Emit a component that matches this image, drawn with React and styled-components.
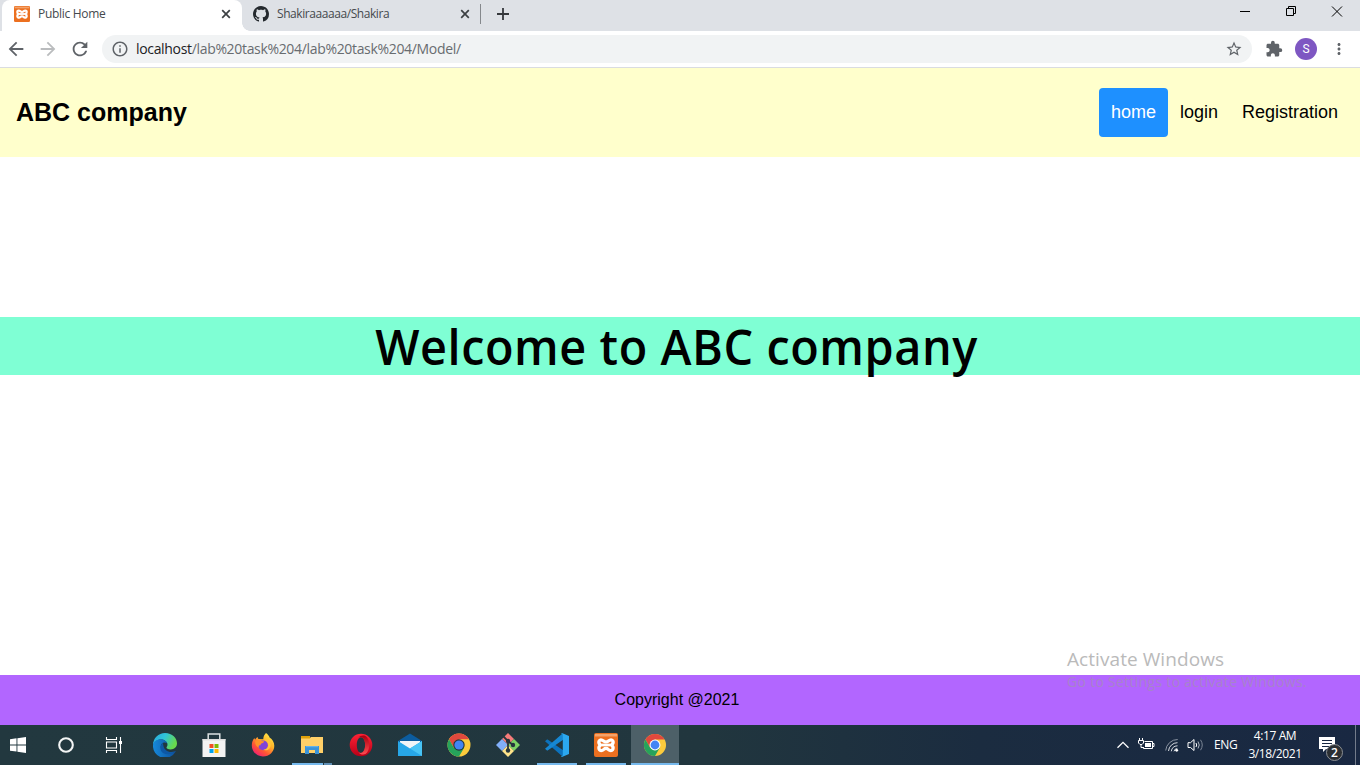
import React from "react";
import styled, { createGlobalStyle } from "styled-components";

const ui = '"Open Sans", "Noto Sans", sans-serif';
const arial = '"Liberation Sans", Arial, sans-serif';

const GlobalStyle = createGlobalStyle`
  * { box-sizing: border-box; }
  body { margin: 0; background: #fff; overflow: hidden; }
  svg { display: block; flex: none; }
`;

const Screen = styled.div`
  position: relative;
  width: 1360px;
  height: 765px;
  display: flex;
  flex-direction: column;
  background: #fff;
`;

/* Browser frame */
const TabStrip = styled.div`
  height: 31px;
  display: flex;
  padding-left: 2px;
  background: #dee1e6;
`;
const Tab = styled.div`
  width: ${(p) => (p.$active ? 240 : 238)}px;
  height: 31px;
  display: flex;
  align-items: center;
  padding: 0 ${(p) => (p.$active ? 10 : 9)}px 3px ${(p) => (p.$active ? 12 : 11)}px;
  gap: 8px;
  background: ${(p) => (p.$active ? "#fff" : "transparent")};
  border-radius: 8px 8px 0 0;
`;
const TabFoot = styled.div`
  width: 8px;
  height: 8px;
  margin: 23px -8px 0 0;
  background: radial-gradient(circle at 100% 0, #dee1e6 7.5px, #fff 8px);
`;
const TabTitle = styled.span`
  flex: 1;
  font: 12px/16px ${ui};
  letter-spacing: ${(p) => p.$track}px;
  color: #45494d;
  white-space: nowrap;
`;
const TabDivider = styled.div`
  width: 1px;
  height: 20px;
  margin: 4px 16px 0 0;
  background: #85888c;
`;
const NewTab = styled.div`
  padding-top: 8px;
`;
const WindowControls = styled.div`
  display: flex;
  align-items: center;
  height: 23px;
  margin-left: auto;
  & > svg { margin: 0 17px; }
`;
const AddressRow = styled.div`
  height: 37px;
  display: flex;
  align-items: center;
  padding-left: 5px;
  border-bottom: 1px solid #dadce0;
  background: #fff;
`;
const NavButtons = styled.div`
  display: flex;
  gap: 10px;
  margin-right: 11px;
`;
const AddressBar = styled.div`
  width: 1150px;
  height: 28px;
  margin-right: 13px;
  border-radius: 14px;
  background: #f1f3f4;
  display: flex;
  align-items: center;
  padding: 0 9px;
`;
const Url = styled.span`
  flex: 1;
  margin-left: 7px;
  font: 14px/20px ${ui};
  letter-spacing: -0.33px;
  color: #686c70;
  b { font-weight: 400; color: #202124; }
`;
const Avatar = styled.div`
  width: 22px;
  height: 22px;
  margin: 0 13px 0 12px;
  border-radius: 50%;
  background: #7e57c2;
  color: #fff;
  font: 12px/22px Roboto, sans-serif;
  text-align: center;
`;

/* Web page */
const SiteHeader = styled.header`
  height: 89px;
  display: flex;
  align-items: center;
  justify-content: space-between;
  padding: 0 10px 0 16px;
  background: #ffffcc;
  font-family: ${arial};
`;
const Brand = styled.div`
  font-size: 25px;
  line-height: 25px;
  font-weight: 700;
`;
const SiteNav = styled.nav`
  display: flex;
`;
const NavLink = styled.a`
  padding: 12px;
  font-size: 18px;
  line-height: 25px;
  border-radius: 4px;
  color: ${(p) => (p.$active ? "#fff" : "#000")};
  background: ${(p) => (p.$active ? "dodgerblue" : "transparent")};
`;
const Content = styled.main`
  flex: 1;
  padding-top: 160px;
`;
const Welcome = styled.h1`
  height: 58px;
  margin: 0;
  padding-right: 6px;
  background: #7fffd4;
  font: 650 49px/58px ${ui};
  letter-spacing: 0.6px;
  text-align: center;
  span { display: inline-block; transform: scaleX(0.955); }
`;
const SiteFooter = styled.footer`
  height: 50px;
  padding-right: 6px;
  background: #b266ff;
  font: 16px/50px ${arial};
  text-align: center;
`;

/* Desktop */
const Watermark = styled.div`
  position: absolute;
  left: 1067px;
  top: 646px;
  font-family: ${ui};
  white-space: nowrap;
`;
const WatermarkTitle = styled.div`
  font-size: 19px;
  line-height: 26px;
  letter-spacing: 0.07px;
  color: #bababa;
`;
const WatermarkText = styled.div`
  font-size: 14px;
  line-height: 19px;
  letter-spacing: 0.3px;
  color: #a783cb;
`;
const Taskbar = styled.div`
  height: 40px;
  display: flex;
  background: linear-gradient(90deg, #22383f 0%, #21363e 52%, #1b2c40 72%, #192842 100%);
`;
const SystemButton = styled.div`
  width: ${(p) => p.$width}px;
  display: grid;
  place-items: center;
`;
const Apps = styled.div`
  display: flex;
  gap: 1px;
  margin-left: 9px;
`;
const TaskbarApp = styled.div`
  width: 48px;
  height: 40px;
  display: grid;
  grid-template-rows: 38px 2px;
  justify-items: center;
  background: ${(p) => (p.$focused ? "#4d6068" : "transparent")};
  & > svg { margin-top: 8px; }
`;
const Running = styled.div`
  display: flex;
  gap: 1px;
  width: ${(p) => (p.$full ? 48 : 40)}px;
  height: 2px;
  &::before { content: ""; flex: 1; background: #76b9ed; }
  &::after { content: ""; display: ${(p) => (p.$stacked ? "block" : "none")}; width: 8px; background: #5f8fb5; }
`;
const Tray = styled.div`
  display: flex;
  align-items: center;
  margin-left: auto;
  color: #fff;
  font: 12px/18px ${ui};
`;
const TrayIcons = styled.div`
  display: flex;
  align-items: center;
  gap: 8px;
  & > svg:nth-child(2) { margin-right: 2px; }
`;
const Language = styled.span`
  width: 24px;
  margin-left: 10px;
  letter-spacing: -0.4px;
`;
const Clock = styled.div`
  width: 60px;
  margin: 0 14px 0 7px;
  text-align: center;
  letter-spacing: -0.4px;
  white-space: nowrap;
`;
const Notifications = styled.div`
  position: relative;
  width: 26px;
  height: 40px;
  padding-top: 11px;
`;
const Badge = styled.span`
  position: absolute;
  left: 7px;
  top: 19px;
  width: 17px;
  height: 17px;
  border: 1px solid #8b8f94;
  border-radius: 50%;
  background: #2b2f33;
  font: 600 12px/15px ${ui};
  text-align: center;
`;
const ShowDesktop = styled.div`
  width: 5px;
  height: 40px;
  margin-left: 10px;
  border-left: 1px solid #737c8b;
`;

const Xampp = ({ size }) => (
  <svg width={size} height={size} viewBox="0 0 24 24">
    <rect width="24" height="24" rx="2" fill="#ec7020" />
    <path d="M1 1h22v2.500H1z" fill="#f3a36b" />
    <path
      d="M8.200 7.200C4.500 6 3.800 10 6.600 12c-2.800 2-2 6.600 1.800 5.300 1.600-.6 1.600-1.900 3.600-1.900s2 1.300 3.600 1.900c3.800 1.300 4.600-3.300 1.800-5.300 2.800-2 2.100-6-1.600-4.800C14.200 7.800 14 8.900 12 8.900s-2.200-1.100-3.800-1.700z"
      fill="none"
      stroke="#fff"
      strokeWidth="3.300"
      strokeLinejoin="round"
    />
    <path d="M7.500 12h9" stroke="#fff" strokeWidth="2.800" />
  </svg>
);
const Github = () => (
  <svg width="16" height="16" viewBox="0 0 16 16" fill="#24292e">
    <path d="M8 0C3.580 0 0 3.580 0 8c0 3.540 2.290 6.530 5.470 7.590.4.070.55-.17.55-.38 0-.19-.01-.82-.01-1.490-2.010.37-2.530-.49-2.690-.94-.09-.23-.48-.94-.82-1.130-.28-.15-.68-.52-.01-.53.63-.01 1.080.58 1.230.82.72 1.210 1.870.87 2.330.66.07-.52.28-.87.51-1.070-1.780-.2-3.640-.89-3.640-3.950 0-.87.31-1.590.82-2.150-.08-.2-.36-1.020.08-2.120 0 0 .67-.21 2.200.82.64-.18 1.320-.27 2-.27s1.360.09 2 .27c1.530-1.040 2.200-.82 2.200-.82.44 1.100.16 1.920.08 2.120.51.56.82 1.270.82 2.150 0 3.070-1.870 3.750-3.650 3.950.29.25.54.73.54 1.480 0 1.070-.01 1.930-.01 2.200 0 .21.15.46.55.38A8.010 8.010 0 0 0 16 8c0-4.420-3.580-8-8-8z" />
  </svg>
);
const CloseTab = () => (
  <svg width="12" height="12" viewBox="0 0 12 12" stroke="#3c4043" strokeWidth="1.700">
    <path d="M2.200 2.200l7.600 7.600M9.800 2.200l-7.600 7.600" />
  </svg>
);
const Material = ({ d, size = 18, fill = "#5f6368" }) => (
  <svg width={size} height={size} viewBox="0 0 24 24" fill={fill}><path d={d} /></svg>
);
const arrowBack = "M20 11H7.830l5.590-5.590L12 4l-8 8 8 8 1.410-1.410L7.830 13H20v-2z";
const arrowForward = "M12 4l-1.410 1.410L16.170 11H4v2h12.170l-5.580 5.590L12 20l8-8z";
const refresh = "M17.650 6.350A7.958 7.958 0 0 0 12 4c-4.420 0-7.990 3.580-7.990 8s3.570 8 7.990 8c3.730 0 6.840-2.550 7.730-6h-2.080A5.990 5.990 0 0 1 12 18c-3.310 0-6-2.690-6-6s2.690-6 6-6c1.660 0 3.140.69 4.220 1.780L13 11h7V4l-2.350 2.350z";
const info = "M11 7h2v2h-2zm0 4h2v6h-2zm1-9C6.480 2 2 6.480 2 12s4.480 10 10 10 10-4.480 10-10S17.520 2 12 2zm0 18c-4.410 0-8-3.590-8-8s3.590-8 8-8 8 3.590 8 8-3.590 8-8 8z";
const star = "M22 9.240l-7.190-.62L12 2 9.190 8.630 2 9.240l5.460 4.730L5.820 21 12 17.270 18.180 21l-1.630-7.030L22 9.240zM12 15.400l-3.760 2.270 1-4.280-3.320-2.880 4.380-.38L12 6.100l1.710 4.040 4.380.38-3.320 2.880 1 4.280L12 15.400z";
const puzzle = "M20.500 11H19V7c0-1.100-.9-2-2-2h-4V3.500a2.500 2.500 0 0 0-5 0V5H4c-1.100 0-1.990.9-1.990 2v3.800H3.500c1.490 0 2.700 1.210 2.700 2.700s-1.210 2.700-2.700 2.700H2V20c0 1.100.9 2 2 2h3.800v-1.500c0-1.490 1.210-2.700 2.700-2.700s2.700 1.210 2.700 2.700V22H17c1.100 0 2-.9 2-2v-4h1.500a2.500 2.500 0 0 0 0-5z";
const more = "M12 8c1.100 0 2-.9 2-2s-.9-2-2-2-2 .9-2 2 .9 2 2 2zm0 2c-1.100 0-2 .9-2 2s.9 2 2 2 2-.9 2-2-.9-2-2-2zm0 6c-1.100 0-2 .9-2 2s.9 2 2 2 2-.9 2-2-.9-2-2-2z";

const WindowsLogo = () => (
  <svg width="16" height="16" viewBox="0 0 16 16" fill="#fff">
    <path d="M0 2.200L6.500 1.300v6.200H0zM7.400 1.200L16 0v7.500H7.400zM0 8.400h6.500v6.200L0 13.700zM7.400 8.400H16V16l-8.600-1.200z" />
  </svg>
);
const Cortana = () => (
  <svg width="18" height="18" viewBox="0 0 18 18"><circle cx="9" cy="9" r="6.800" fill="none" stroke="#f3f5f5" strokeWidth="2.100" /></svg>
);
const TaskView = () => (
  <svg width="18" height="16" viewBox="0 0 18 16" fill="none" stroke="#fff" strokeWidth="1.100">
    <path d="M1.500 0v2.500h10V0M1.500 16v-2.500h10V16M1.500 5h10v6h-10zM15.500 0v16" />
    <path d="M14 4h3v3h-3z" fill="#fff" stroke="none" />
  </svg>
);
const Edge = () => (
  <svg width="24" height="24" viewBox="0 0 24 24">
    <defs>
      <linearGradient id="edgeTop" x1="0" x2="1" y1="0" y2=".4"><stop offset="0" stopColor="#2aa5dd" /><stop offset=".5" stopColor="#2fc5d8" /><stop offset="1" stopColor="#68d84c" /></linearGradient>
      <linearGradient id="edgeLow" x1="0" x2="1"><stop offset="0" stopColor="#1689da" /><stop offset="1" stopColor="#0d4f9c" /></linearGradient>
    </defs>
    <path d="M0 12A12 12 0 0 1 12 0c7.500 0 12 5.200 12 10.300 0 4-3 6.200-6.200 6.200-3 0-4.300-1-4.300-1.900 0-.7 1-1.200 1-2.800C14.500 8.500 11 6.500 8 6.500c-4 0-7 2.500-8 5.500z" fill="url(#edgeTop)" />
    <path d="M0 12c.5-3.500 4-5.700 7.500-5.700 3.500 0 6 2 6.800 4-4-2-7 .5-6.500 4.200.5 3.800 4.200 6.500 8.500 6 2.500-.2 4.500-1.500 5.500-2.300.6-.4 1 0 .7.500A12 12 0 0 1 0 12z" fill="url(#edgeLow)" />
    <path d="M10 9.800c-3.500 2.500-3.500 8 .5 10.500 4 2.200 9 .5 11.300-2.100-2.800 1.200-6.500 1-8.800-1-2.700-2.300-2.800-4.800-3-7.400z" fill="#0d58a6" />
  </svg>
);
const Store = () => (
  <svg width="24" height="24" viewBox="0 0 24 24">
    <path d="M6.200 7V1h11.600v6" fill="none" stroke="#dce2e3" strokeWidth="1.500" />
    <path d="M.5 6h23v18H.5z" fill="#f3f3f3" />
    <path d="M.5 6h23v1.500H.5z" fill="#dedede" />
    <path d="M7.500 11h4v4h-4z" fill="#f25022" /><path d="M12.500 11h4v4h-4z" fill="#7fba00" />
    <path d="M7.500 16h4v4h-4z" fill="#00a4ef" /><path d="M12.500 16h4v4h-4z" fill="#ffb900" />
  </svg>
);
const Firefox = () => (
  <svg width="24" height="24" viewBox="0 0 24 24">
    <defs><linearGradient id="fox" x1=".9" y1="0" x2=".2" y2="1"><stop offset="0" stopColor="#fff44f" /><stop offset=".4" stopColor="#ffb128" /><stop offset=".7" stopColor="#ff5634" /><stop offset="1" stopColor="#ef177b" /></linearGradient></defs>
    <path d="M15 0c2 1.200 3 3 3.600 4.500 2.800 1.400 4.700 4.900 4.700 8.300C23.300 19 18.200 23.500 12 23.500S.8 18.600.8 12.500C.8 9 2 6.600 3.500 5c.1 1 .4 1.300.8 1.600.5-1.200 1.400-2.100 2.400-2.600 0 1 .3 1.800 1 2.100l4.600.2C12.200 3.500 13.500 1.500 15 0z" fill="url(#fox)" />
    <circle cx="12" cy="12.300" r="4.900" fill="#8043d7" />
    <path d="M4.200 8.200c2-1.400 4.600-1.300 6.200-.2l2.700.3c-.2 1.500-1.600 1.900-2.800 2.300-.8.500-.7 1.300-.7 1.700-2.200-.5-2.500 1.400-1.200 2.500-3-.8-4.500-3.600-4.200-6.600z" fill="#ff9229" />
    <path d="M13.600 7c2 .7 3.600 2.400 3.600 5 0 3-2.700 5-5.400 4.600 4.400 2.200 8.500-1.200 8-5.700-.2-2.600-1.500-4-3.200-5z" fill="#ffc53a" />
  </svg>
);
const Folder = () => (
  <svg width="24" height="24" viewBox="0 0 24 24">
    <path d="M1 5h9l1-1h12v16H1z" fill="#ffd068" />
    <path d="M1 3h9v2.500H1z" fill="#dfa10a" />
    <path d="M5 21v-8h14v8h-4v-4H9v4z" fill="#3b94d9" />
    <path d="M6 13h12v1.200H6z" fill="#63b1e8" />
  </svg>
);
const Opera = () => (
  <svg width="24" height="24" viewBox="0 0 24 24">
    <defs>
      <linearGradient id="operaRing" x1="0" x2="0" y1="0" y2="1"><stop offset="0" stopColor="#ff2235" /><stop offset="1" stopColor="#b80018" /></linearGradient>
      <linearGradient id="operaSide" x1="0" x2="0" y1="0" y2="1"><stop offset="0" stopColor="#a8000f" /><stop offset="1" stopColor="#ff4c52" /></linearGradient>
    </defs>
    <path d="M12 .7a11.300 11.300 0 1 0 0 22.600 11.300 11.300 0 0 0 0-22.600zm0 3.500c2.800 0 4.200 3.800 4.200 7.800s-1.400 7.800-4.200 7.800S7.800 16 7.800 12s1.400-7.800 4.200-7.800z" fill="url(#operaRing)" fillRule="evenodd" />
    <path d="M9.500 4.800C11 2.600 14 2 16.500 3c5 3 5 15 0 18-2.500 1-5.500.4-7-1.800 1.300.9 2.800.9 4 .1C17 16.500 17 7.500 13.500 4.700c-1.200-.8-2.700-.8-4 .1z" fill="url(#operaSide)" />
  </svg>
);
const Mail = () => (
  <svg width="24" height="24" viewBox="0 0 24 24">
    <path d="M0 8l12-7.500L24 8v4H0z" fill="#0c5c9e" />
    <path d="M2 8h20v8H2z" fill="#f2f5f7" />
    <path d="M0 8l12 7.500L24 8v15H0z" fill="#27a7e8" /><path d="M24 8v15L12 15.500z" fill="#48c4f5" />
  </svg>
);
const Chrome = ({ small }) => (
  <svg width="24" height="24" viewBox={small ? "-.5 -.5 25 25" : "0 0 24 24"}>
    <circle cx="12" cy="12" r="11.500" fill="#fbcb3c" />
    <path d="M2.040 6.250A11.500 11.500 0 0 1 21.960 6.250H12L7 14.900z" fill="#e0483d" />
    <path d="M2.040 6.250A11.500 11.500 0 0 0 12 23.500l5-8.600H7z" fill="#26a35b" />
    <circle cx="12" cy="12" r="5.700" fill={small ? "#fff" : "#24363c"} /><circle cx="12" cy="12" r="4.600" fill="#4285f4" />
  </svg>
);
const Git = () => (
  <svg width="24" height="24" viewBox="0 0 24 24">
    <path d="M12 0l6 6-6 6-6-6z" fill="#f67b7a" /><path d="M6 6l6 6-6 6-6-6z" fill="#81aff9" />
    <path d="M18 6l6 6-6 6-6-6z" fill="#7ed366" /><path d="M12 12l6 6-6 6-6-6z" fill="#ffe38a" />
    <path d="M7.500 3.500L12 8v10M12 8l5 4" fill="none" stroke="#26363d" strokeWidth="1.800" />
    <g fill="#26363d"><circle cx="12" cy="8" r="2.200" /><circle cx="12" cy="17.500" r="2.200" /><circle cx="17" cy="12" r="2.200" /></g>
  </svg>
);
const VsCode = () => (
  <svg width="24" height="24" viewBox="0 0 24 24">
    <path d="M1.700 6.700L0 8.200l17.500 15.300 1.700-5.500L3 6.700c-.4-.3-.9-.3-1.300 0z" fill="#0c72bd" />
    <path d="M1.700 17.300L0 15.800 17.500.5l1.700 5.500L3 17.300c-.4.300-.9.300-1.300 0z" fill="#1687d2" />
    <path d="M17.500.2L24 3v18l-6.500 2.800c-.8 0-1.200-.4-1.700-.9.900.4 2 .1 2-1.400v-19c0-1.500-1.100-1.800-2-1.400.5-.5.900-.9 1.700-.9z" fill="#2ba8ef" />
  </svg>
);
const Caret = () => <svg width="14" height="10" viewBox="0 0 14 10" fill="none" stroke="#fff" strokeWidth="1.300"><path d="M1.500 7.800L7 2.300l5.500 5.500" /></svg>;
const Battery = () => (
  <svg width="17" height="14" viewBox="0 0 17 14" fill="none" stroke="#fff">
    <path d="M6.500 3.500h8v7h-9V9M14.500 5.500H16v3h-1.500M1.500 0v2.500M4.500 0v2.500M3 6v3.500h2" />
    <path d="M.5 2.500h5V5L4 6.500H2L.5 5z" fill="#1b2b43" /><path d="M7 5h6v4H7z" fill="#fff" stroke="none" />
  </svg>
);
const Wifi = () => (
  <svg width="14" height="14" viewBox="0 0 14 14" fill="none" stroke="#d6dae0">
    <path d="M.7 12.500A12 12 0 0 1 12.700 1.500" stroke="#8c95a3" /><path d="M3.500 13a9 9 0 0 1 9-8.300M6.300 13.300a6.500 6.500 0 0 1 6.200-5.500" /><path d="M9 13.300a3.500 3.500 0 0 1 3.300-2.800" /><circle cx="11.700" cy="12.300" r="1.400" fill="#fff" stroke="none" />
  </svg>
);
const Volume = () => (
  <svg width="17" height="14" viewBox="0 0 17 14" fill="none" stroke="#fff">
    <path d="M1 4.700h2.500L7 1.500v11L3.500 9.500H1z" /><path d="M9 5q1.400 2 0 4" /><path d="M11 3.500q2.500 3.500 0 7" stroke="#b0b7c0" /><path d="M13.500 1.800q3.500 5.200 0 10.400" stroke="#7c8796" />
  </svg>
);

const apps = [
  { name: "edge", icon: <Edge /> },
  { name: "store", icon: <Store /> },
  { name: "firefox", icon: <Firefox /> },
  { name: "explorer", icon: <Folder />, running: true, stacked: true },
  { name: "opera", icon: <Opera /> },
  { name: "mail", icon: <Mail /> },
  { name: "chrome", icon: <Chrome /> },
  { name: "git", icon: <Git /> },
  { name: "code", icon: <VsCode />, running: true },
  { name: "xampp", icon: <Xampp size={24} />, running: true },
  { name: "chrome-window", icon: <Chrome small />, running: true, focused: true },
];

export default function App() {
  return (
    <Screen>
      <GlobalStyle />
      <TabStrip>
        <Tab $active>
          <Xampp size={16} />
          <TabTitle $track={-0.3}>Public Home</TabTitle>
          <CloseTab />
        </Tab>
        <TabFoot />
        <Tab>
          <Github />
          <TabTitle $track={-0.43}>Shakiraaaaaa/Shakira</TabTitle>
          <CloseTab />
        </Tab>
        <TabDivider />
        <NewTab>
          <svg width="12" height="12" viewBox="0 0 12 12" stroke="#35383c" strokeWidth="1.800"><path d="M6 0v12M0 6h12" /></svg>
        </NewTab>
        <WindowControls>
          <svg width="12" height="12" viewBox="0 0 12 12"><path d="M1 5h10v1H1z" /></svg>
          <svg width="12" height="12" viewBox="0 0 12 12" fill="none" stroke="#000"><path d="M1.500 3.500h7v7h-7zM3.500 3.500v-2h7v7h-2" transform="translate(0 -1)" /></svg>
          <svg width="12" height="12" viewBox="0 0 12 12" fill="none" stroke="#000"><path d="M1 .5l10 10M11 .5l-10 10" /></svg>
        </WindowControls>
      </TabStrip>
      <AddressRow>
        <NavButtons>
          <Material d={arrowBack} size={22} />
          <Material d={arrowForward} size={22} fill="#babcbe" />
          <Material d={refresh} size={22} />
        </NavButtons>
        <AddressBar>
          <Material d={info} size={18} />
          <Url><b>localhost</b>/lab%20task%204/lab%20task%204/Model/</Url>
          <Material d={star} size={18} />
        </AddressBar>
        <Material d={puzzle} size={18} />
        <Avatar>S</Avatar>
        <Material d={more} size={18} />
      </AddressRow>
      <SiteHeader>
        <Brand>ABC company</Brand>
        <SiteNav>
          <NavLink $active>home</NavLink>
          <NavLink>login</NavLink>
          <NavLink>Registration</NavLink>
        </SiteNav>
      </SiteHeader>
      <Content>
        <Welcome><span>Welcome to ABC company</span></Welcome>
      </Content>
      <SiteFooter>Copyright @2021</SiteFooter>
      <Taskbar>
        <SystemButton $width={36}><WindowsLogo /></SystemButton>
        <SystemButton $width={60}><Cortana /></SystemButton>
        <SystemButton $width={36}><TaskView /></SystemButton>
        <Apps>
          {apps.map((a) => (
            <TaskbarApp key={a.name} $focused={a.focused}>
              {a.icon}
              {a.running && <Running $full={a.focused} $stacked={a.stacked} />}
            </TaskbarApp>
          ))}
        </Apps>
        <Tray>
          <TrayIcons><Caret /><Battery /><Wifi /><Volume /></TrayIcons>
          <Language>ENG</Language>
          <Clock>4:17 AM<br />3/18/2021</Clock>
          <Notifications>
            <svg width="17" height="17" viewBox="0 0 17 17"><path d="M0 1h16v12H7l-3 3v-3H0z" fill="#fff" /><path d="M3 4.500h10M3 7.500h10M3 10.500h7" stroke="#192842" /></svg>
            <Badge>2</Badge>
          </Notifications>
          <ShowDesktop />
        </Tray>
      </Taskbar>
      <Watermark>
        <WatermarkTitle>Activate Windows</WatermarkTitle>
        <WatermarkText>Go to Settings to activate Windows.</WatermarkText>
      </Watermark>
    </Screen>
  );
}
